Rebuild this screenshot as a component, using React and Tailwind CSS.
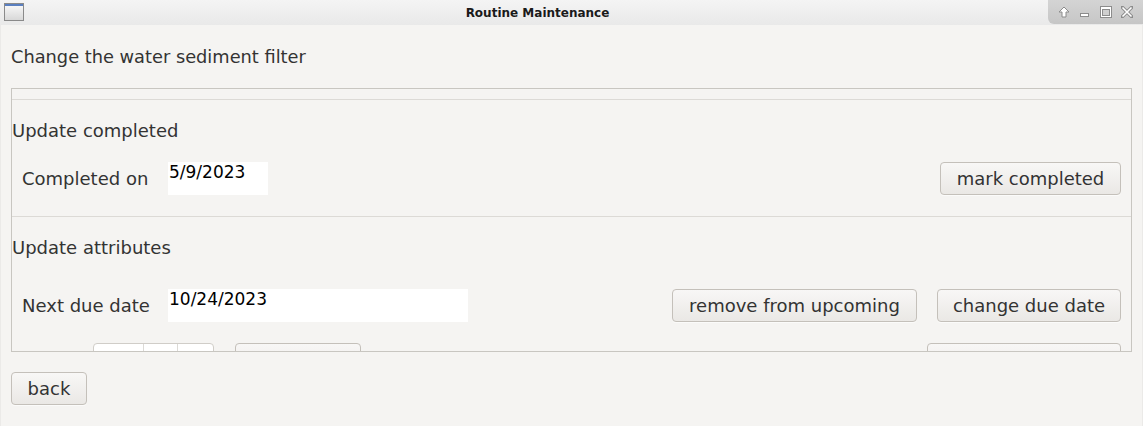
import React from 'react';

const font = { fontFamily: '"DejaVu Sans", "Liberation Sans", sans-serif' };

const Btn = ({ children, className = '' }) => (
  <div
    className={`flex h-[33px] items-center justify-center rounded-[4px] border border-[#c4c0ba] bg-gradient-to-b from-[#f8f7f6] to-[#eae8e5] text-[18px] leading-none text-[#333333] shadow-[0_1px_0_rgba(255,255,255,0.6)] ${className}`}
  >
    {children}
  </div>
);

const Field = ({ value, className = '' }) => (
  <div className={`h-[33px] bg-white pl-[1px] text-[17px] leading-[20px] text-black ${className}`}>
    {value}
  </div>
);

const TitleBar = () => (
  <div className="flex h-[25px] shrink-0 items-stretch bg-gradient-to-b from-[#f4f4f4] to-[#e9e9e9]">
    <div className="flex w-[27px] items-start pl-[4px] pt-[3px]">
      <div className="flex h-[18px] w-[20px] flex-col border border-[#8a8a8a] bg-gradient-to-b from-[#fafafa] to-[#d8d8d8]">
        <div className="h-[2px] bg-[#5a7fc0]" />
      </div>
    </div>
    <div className="flex flex-1 items-center justify-center text-[12px] font-bold text-[#1a1a1a]">
      Routine Maintenance
    </div>
    <div className="flex h-[24px] w-[95px] items-center justify-around rounded-bl-[6px] bg-gradient-to-b from-[#d4d4d4] to-[#c6c6c6] px-[6px]">
      <svg width="12" height="12" viewBox="0 0 12 12">
        <path d="M6 1 L11 6 L8 6 L8 11 L4 11 L4 6 L1 6 Z" fill="#fff" stroke="#8c8c8c" strokeWidth="1" />
      </svg>
      <svg width="12" height="12" viewBox="0 0 12 12">
        <rect x="1.5" y="7.5" width="8" height="3" fill="#fff" stroke="#8c8c8c" strokeWidth="1" />
      </svg>
      <svg width="12" height="12" viewBox="0 0 12 12">
        <rect x="0.5" y="0.5" width="11" height="11" fill="#fff" stroke="#8c8c8c" strokeWidth="1" />
        <rect x="2.5" y="3.5" width="7" height="6" fill="#cfcfcf" stroke="#8c8c8c" strokeWidth="1" />
      </svg>
      <svg width="12" height="12" viewBox="0 0 12 12">
        <path d="M1 1 L11 11 M11 1 L1 11" stroke="#8c8c8c" strokeWidth="3.4" strokeLinecap="square" />
        <path d="M1.5 1.5 L10.5 10.5 M10.5 1.5 L1.5 10.5" stroke="#fff" strokeWidth="1.6" />
      </svg>
    </div>
  </div>
);

export default function App() {
  return (
    <div className="flex h-[426px] w-[1143px] flex-col overflow-hidden bg-[#f5f4f2]" style={font}>
      <TitleBar />
      <div className="flex flex-1 flex-col border-x border-[#ebeae8] px-[10px]">
        <div className="mt-[21px] text-[17.8px] leading-[21px] text-[#333333]">
          Change the water sediment filter
        </div>

        {/* scroll area */}
        <div className="mt-[21px] flex h-[264px] flex-col overflow-hidden border border-[#c8c6c1]">
          <div className="mt-[10px] h-px shrink-0 bg-[#dcdad6]" />

          <div className="mt-[20px] text-[18px] leading-[21px] text-[#333333]">Update completed</div>
          <div className="mt-[21px] flex shrink-0 items-center pl-[10px] pr-[10px]">
            <div className="w-[146px] text-[18px] text-[#333333]">Completed on</div>
            <Field value="5/9/2023" className="w-[100px]" />
            <div className="flex-1" />
            <Btn className="w-[181px]">mark completed</Btn>
          </div>

          <div className="mt-[21px] h-px shrink-0 bg-[#dcdad6]" />

          <div className="mt-[20px] text-[18px] leading-[21px] text-[#333333]">Update attributes</div>
          <div className="mt-[31px] flex shrink-0 items-center pl-[10px] pr-[10px]">
            <div className="w-[146px] text-[18px] text-[#333333]">Next due date</div>
            <Field value="10/24/2023" className="w-[300px]" />
            <div className="flex-1" />
            <Btn className="w-[245px]">remove from upcoming</Btn>
            <Btn className="ml-[20px] w-[184px]">change due date</Btn>
          </div>

          <div className="mt-[21px] flex shrink-0 items-start pr-[10px]">
            <div className="ml-[81px] flex h-[33px] w-[121px] rounded-t-[4px] border border-[#d0cdc8] bg-white">
              <div className="w-[50px] border-r border-[#dcdad6]" />
              <div className="w-[34px] border-r border-[#dcdad6]" />
            </div>
            <Btn className="ml-[21px] w-[126px]" />
            <div className="flex-1" />
            <Btn className="w-[194px]" />
          </div>
        </div>

        <div className="mt-[20px] flex">
          <Btn className="w-[76px]">back</Btn>
        </div>
      </div>
    </div>
  );
}
